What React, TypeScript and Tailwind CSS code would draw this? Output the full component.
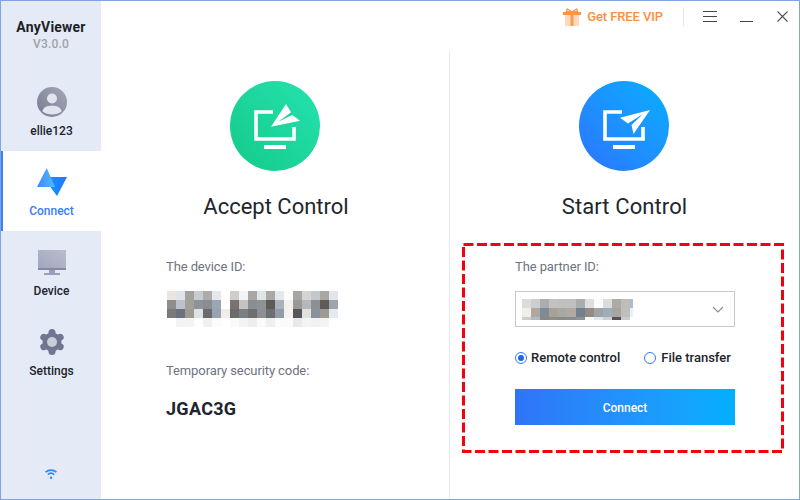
const deviceId = [
  ["#e8e5e2", "#dfe3ea", "#a3a19c", "#c8ccd2", "#aeaca8", "#e4e8ec", "#ffffff", "#cfccca", "#f0f4f8", "#a8a7a3", "#e2e5e8", "#a9a8a6", "#e4e8ec", "#fbfbfb", "#a8a6a2", "#d4d4d4", "#c4c8cc", "#aaa7a0", "#e2e6ea"],
  ["#8f8d8a", "#bcc2cb", "#a3a098", "#8e9299", "#8a8d90", "#9ba6b4", "#ffffff", "#7a7272", "#c4c3bf", "#8a8d92", "#8e9296", "#5f5a55", "#a8b2bd", "#f4f1ec", "#9c9894", "#b4b8bd", "#8d8f93", "#5e5c5a", "#9da5ad"],
  ["#7a7a7a", "#6a707c", "#9c9a92", "#dfe2e2", "#6a6a6a", "#98a2b5", "#f0ece6", "#6c6b6b", "#7c7e80", "#6f6f6f", "#8c9094", "#6c6e70", "#939ba8", "#f6f1ec", "#55575c", "#e2e1dc", "#8a929e", "#a09a94", "#e4e9f2"],
  ["#ffffff", "#f2f3f4", "#f4f4f2", "#ffffff", "#f0f0ef", "#fbfbfb", "#ffffff", "#fafaf8", "#f2f5f8", "#eeeeee", "#fafafa", "#efefef", "#fbfbfb", "#fbfbfb", "#e8eaea", "#f4f4f4", "#f2f2f2", "#f4f4f2", "#ffffff"],
];

const partnerId = [
  ["#dedcd8", "#ccced2", "#a8adb2", "#c4c2c0", "#c2c0be", "#c2c0be", "#a8adb2", "#dedede", "#fafbfc", "#dadcde", "#aeaaa6", "#c0bcb6", "#a8bcd4"],
  ["#f0eeea", "#b0a8a0", "#7e8a96", "#a6a298", "#a8a8a2", "#b0aaa0", "#74808e", "#928c84", "#a0a2a4", "#a0acb8", "#a8a4a0", "#c0bebc", "#e4f0fa"],
  ["#d0ccc8", "#b4bac4", "#8c8880", "#908c84", "#8c8a84", "#888c90", "#8e9298", "#fbf6ee", "#dfe6ee", "#ccd0d4", "#5a524c", "#c8ccd0", "#ffffff"],
];

function Mosaic({ rows, className }: { rows: string[][]; className: string }) {
  return (
    <div className={className}>
      {rows.flat().map((c, i) => (
        <div key={i} style={{ backgroundColor: c }} />
      ))}
    </div>
  );
}

function Monitor() {
  return (
    <>
      <path d="M43 31H26V58H64V46" fill="none" stroke="#fff" strokeWidth="3.6" />
      <rect x="34" y="64" width="22" height="4" fill="#fff" />
    </>
  );
}

function AcceptBadge() {
  return (
    <div className="w-[90px] h-[90px] rounded-full bg-linear-to-tr from-[#14ca8a] to-[#24e2ae]">
      <svg width="90" height="90" viewBox="0 0 90 90">
        <Monitor />
        <path d="M41 45.7L56 23L61 31.3L48.3 40.7L62.3 34L70 39.7Z" fill="#fff" />
      </svg>
    </div>
  );
}

function StartBadge() {
  return (
    <div className="w-[90px] h-[90px] rounded-full bg-linear-to-tr from-[#2b74ff] to-[#03aeff]">
      <svg width="90" height="90" viewBox="0 0 90 90">
        <Monitor />
        <path d="M71 29L41 36.7L49 42.5L64 33L52.5 44L54.5 53Z" fill="#fff" />
      </svg>
    </div>
  );
}

function Avatar() {
  return (
    <svg width="30" height="30" viewBox="0 0 30 30">
      <defs>
        <linearGradient id="av" x1="0" y1="1" x2="1" y2="0">
          <stop offset="0" stopColor="#767c94" />
          <stop offset="1" stopColor="#a4a8b6" />
        </linearGradient>
      </defs>
      <circle cx="15" cy="15" r="15" fill="url(#av)" />
      <circle cx="15" cy="11.5" r="5" fill="#e2e5ee" />
      <path d="M5.5 24.5C6 20 10 18.8 15 18.8S24 20 24.5 24.5C22 26.6 18.800 27.500 15 27.500S8 26.600 5.500 24.500Z" fill="#e2e5ee" />
    </svg>
  );
}

function ConnectIcon() {
  return (
    <svg width="30" height="28" viewBox="0 0 30 28">
      <defs>
        <linearGradient id="cl" x1="0" y1="0" x2="1" y2="0">
          <stop offset="0" stopColor="#3c86ff" />
          <stop offset="1" stopColor="#54bcff" />
        </linearGradient>
        <linearGradient id="cr" x1="0" y1="0" x2="1" y2="0">
          <stop offset="0" stopColor="#08a0ff" />
          <stop offset="1" stopColor="#2a72ff" />
        </linearGradient>
      </defs>
      <path d="M6 9H30L20 28Z" fill="url(#cr)" />
      <path d="M9.700 0L18 19H0Z" fill="url(#cl)" />
    </svg>
  );
}

function DeviceIcon() {
  return (
    <svg width="28" height="25" viewBox="0 0 28 25">
      <defs>
        <linearGradient id="dv" x1="0" y1="1" x2="1" y2="0">
          <stop offset="0" stopColor="#a2a7bd" />
          <stop offset="1" stopColor="#b9bdcd" />
        </linearGradient>
      </defs>
      <rect width="28" height="18" fill="url(#dv)" />
      <rect y="18" width="28" height="2" fill="#8589a4" />
      <rect x="11" y="20" width="6" height="3" fill="#9a9eb6" />
      <rect x="6" y="23" width="16" height="2" fill="#9a9eb6" />
    </svg>
  );
}

function GearIcon() {
  return (
    <svg width="26" height="26" viewBox="0 0 26 26">
      <circle cx="13" cy="13" r="9.500" fill="#70768f" />
      <g stroke="#70768f" strokeWidth="7" strokeLinecap="round">
        <path d="M13 3.500V22.500" />
        <path d="M4.800 8.300L21.200 17.700" />
        <path d="M4.800 17.700L21.200 8.300" />
      </g>
      <circle cx="13" cy="13" r="5" fill="#c9cdd9" />
    </svg>
  );
}

function WifiIcon() {
  return (
    <svg width="12" height="10" viewBox="0 0 12 10" fill="none" stroke="#2f86ff" strokeWidth="1.700">
      <path d="M0.600 3.200C3.700 0.300 8.300 0.300 11.400 3.200" />
      <path d="M2.800 5.600C4.700 3.900 7.300 3.900 9.200 5.600" />
      <circle cx="6" cy="8.700" r="1.200" fill="#2f86ff" stroke="none" />
    </svg>
  );
}

function GiftIcon() {
  return (
    <svg width="18" height="18" viewBox="0 0 18 18">
      <rect x="2" y="6" width="14" height="12" fill="#ffd9bd" />
      <rect x="0" y="4" width="18" height="3" fill="#ff9440" />
      <rect x="7.500" y="4" width="3" height="14" fill="#ff9c50" />
      <path d="M9 4L4 0.800M9 4L14 0.800M4 0.800L3.500 3.500L9 4.500L14.500 3.500L14 0.800" fill="none" stroke="#ff9440" strokeWidth="1.300" />
    </svg>
  );
}

function NavItem({ label, active, children }: { label: string; active?: boolean; children: React.ReactNode }) {
  return (
    <div className={active ? "h-[80px] flex flex-col items-center border-l-2 border-[#3a7dfd] bg-white pr-px pt-[17px]" : "h-[80px] flex flex-col items-center pl-px pt-[17px]"}>
      <div className="h-[28px] ml-px flex items-center justify-center">{children}</div>
      <div className={active ? "mt-[5px] text-[12px] leading-[20px] font-medium text-[#3a7dfd]" : "mt-[5px] text-[12px] leading-[20px] font-medium text-[#20242c]"}>{label}</div>
    </div>
  );
}

export default function App() {
  return (
    <div className="w-[800px] h-[500px] flex border border-[#7fa4e4] bg-white font-['Roboto',sans-serif] text-[#20242c] overflow-hidden">
      <aside className="w-[100px] shrink-0 bg-[#e4eaf6] flex flex-col">
        <div className="h-[70px] flex flex-col items-center pt-[16px]">
          <div className="text-[14px] leading-[20px] font-bold tracking-[0.2px] text-[#1c1f26]">AnyViewer</div>
          <div className="text-[12px] leading-[16px] font-medium tracking-[0.2px] text-[#a0a2a8] mt-[-1px]">V3.0.0</div>
        </div>
        <div className="h-[80px] flex flex-col items-center pl-px pt-[16px]">
          <div className="ml-px">
            <Avatar />
          </div>
          <div className="mt-[4px] text-[12px] leading-[20px] font-medium">ellie123</div>
        </div>
        <NavItem label="Connect" active>
          <ConnectIcon />
        </NavItem>
        <NavItem label="Device">
          <DeviceIcon />
        </NavItem>
        <NavItem label="Settings">
          <GearIcon />
        </NavItem>
        <div className="mt-auto flex justify-center pb-[20px]">
          <WifiIcon />
        </div>
      </aside>

      <main className="flex-1 flex flex-col">
        <header className="h-[49px] shrink-0 flex items-start justify-end pt-[7px] pr-[11px]">
          <GiftIcon />
          <span className="ml-[6px] text-[13px] leading-[18px] font-medium tracking-[-0.1px] text-[#ff8f3a]">Get FREE VIP</span>
          <div className="ml-[20px] mt-[-1px] w-px h-[19px] bg-[#e2e6f2]" />
          <div className="ml-[19px] mt-[3px] w-[14px] h-[11px] flex flex-col justify-between">
            <div className="h-px bg-[#444]" />
            <div className="h-px bg-[#444]" />
            <div className="h-px bg-[#444]" />
          </div>
          <div className="ml-[23px] mt-[13px] w-[13px] h-px bg-[#444]" />
          <svg className="ml-[24px] mt-[3px]" width="11" height="11" viewBox="0 0 11 11" stroke="#555" strokeWidth="1.100">
            <path d="M0.500 0.500L10.500 10.500M10.500 0.500L0.500 10.500" />
          </svg>
        </header>

        <div className="flex-1 flex">
          <section className="w-[349px] border-r border-[#e8ebf2] flex flex-col pt-[31px]">
            <div className="flex justify-center pr-px">
              <AcceptBadge />
            </div>
            <h2 className="mt-[21px] pl-[2px] text-center text-[22px] leading-[30px] text-[#22262c]">Accept Control</h2>
            <div className="pl-[65px]">
              <div className="mt-[35px] text-[13px] leading-[20px] tracking-[-0.1px] text-[#6f7480]">The device ID:</div>
              <Mosaic rows={deviceId} className="mt-[14px] ml-px grid grid-cols-[repeat(19,9px)] auto-rows-[9px]" />
              <div className="mt-[34px] text-[13px] leading-[20px] tracking-[-0.1px] text-[#6f7480]">Temporary security code:</div>
              <div className="mt-[16px] text-[18px] leading-[24px] font-bold tracking-[0.3px] text-[#20242c]">JGAC3G</div>
            </div>
          </section>

          <section className="flex-1 flex flex-col pt-[31px]">
            <div className="flex justify-center pr-[2px]">
              <StartBadge />
            </div>
            <h2 className="mt-[21px] text-center text-[22px] leading-[30px] tracking-[0.1px] text-[#22262c]">Start Control</h2>
            <div className="relative mt-[21px] ml-[12px] w-[322px] h-[210px] pl-[53px] pt-[14px]">
              <svg className="absolute inset-0" width="322" height="210" viewBox="0 0 322 210" fill="none">
                <rect x="1.500" y="1.500" width="319" height="207" stroke="#f5000f" strokeWidth="3" strokeDasharray="10 3.500" />
              </svg>
              <div className="text-[13px] leading-[20px] tracking-[-0.1px] text-[#6f7480]">The partner ID:</div>
              <div className="mt-[14px] w-[220px] h-[36px] border border-[#c6c8cc] flex items-center pl-[6px] pr-[10px]">
                <Mosaic rows={partnerId} className="grid grid-cols-[repeat(12,9px)_3px] grid-rows-[9px_9px_3px]" />
                <svg className="ml-auto" width="12" height="7" viewBox="0 0 12 7" fill="none" stroke="#8a8e96" strokeWidth="1.200">
                  <path d="M1 1L6 6L11 1" />
                </svg>
              </div>
              <div className="mt-[21px] h-[20px] flex items-center text-[13px] font-medium text-[#20242c]">
                <div className="w-[12px] h-[12px] rounded-full border border-[#2f7bf0] flex items-center justify-center">
                  <div className="w-[6px] h-[6px] rounded-full bg-[#1c68e0]" />
                </div>
                <span className="ml-[4px]">Remote control</span>
                <div className="ml-[24px] w-[12px] h-[12px] rounded-full border border-[#2f7bf0]" />
                <span className="ml-[5px]">File transfer</span>
              </div>
              <button className="mt-[21px] w-[220px] h-[36px] pt-px bg-linear-to-r from-[#2f74f8] to-[#02b0ff] text-white text-[12px] font-medium">Connect</button>
            </div>
          </section>
        </div>
      </main>
    </div>
  );
}
